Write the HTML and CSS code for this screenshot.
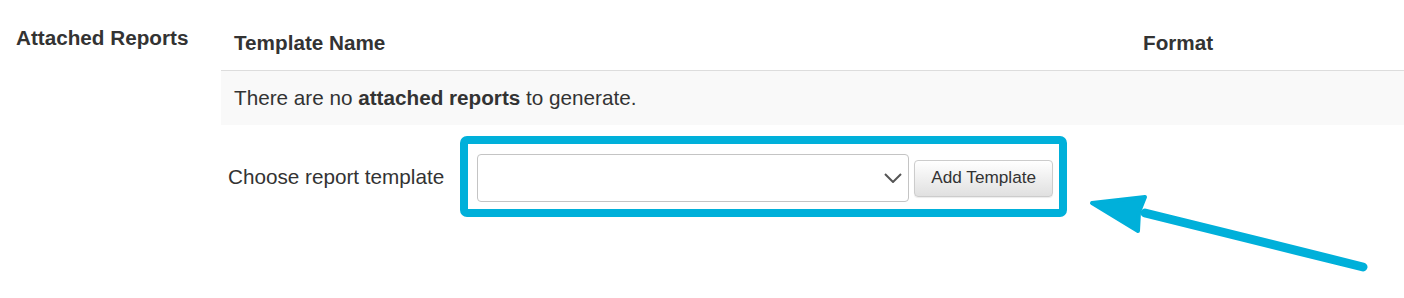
FILE: index.html
```html
<!DOCTYPE html>
<html>
<head>
<meta charset="utf-8">
<link rel="stylesheet" href="styles.css">
</head>
<body>
<div class="section">
  <div class="section-label">Attached Reports</div>
  <div class="section-body">
    <table class="reports">
      <colgroup><col class="col-name"><col class="col-format"></colgroup>
      <thead>
        <tr><th>Template Name</th><th>Format</th></tr>
      </thead>
      <tbody>
        <tr><td colspan="2">There are no <b>attached reports</b> to generate.</td></tr>
      </tbody>
    </table>
    <div class="choose-row">
      <label class="choose-label">Choose report template</label>
      <div class="highlight">
        <div class="select-box">
          <svg class="chevron" width="18" height="10" viewBox="0 0 18 10"><path d="M1 1 L9 9 L17 1" fill="none" stroke="#555" stroke-width="2"/></svg>
        </div>
        <button class="btn">Add Template</button>
      </div>
    </div>
  </div>
</div>
<svg class="arrow" width="1404" height="298" viewBox="0 0 1404 298">
  <line x1="1363" y1="267" x2="1145" y2="213" stroke="#00b0da" stroke-width="9" stroke-linecap="round"/>
  <polygon points="1092,203 1145,197 1139,212 1138,231" fill="#00b0da" stroke="#00b0da" stroke-width="4" stroke-linejoin="round"/>
</svg>
</body>
</html>
```
FILE: styles.css
```css
html, body {
  margin: 0;
  padding: 0;
  background: #fff;
}
body {
  font-family: "Liberation Sans", Arial, sans-serif;
  font-size: 20.7px;
  line-height: 29.4px;
  color: #333;
  position: relative;
  width: 1404px;
  height: 298px;
  overflow: hidden;
}
.section {
  display: flex;
  padding-top: 16px;
}
.section-label {
  width: 205px;
  padding-left: 16px;
  padding-top: 7px;
  font-weight: bold;
}
.section-body {
  flex: 1;
}
.reports {
  width: 100%;
  border-collapse: collapse;
  table-layout: fixed;
}
.col-name { width: 909px; }
.reports th {
  text-align: left;
  font-weight: bold;
  padding: 12.3px 13px;
  border-bottom: 1px solid #ddd;
}
.reports td {
  background: #f9f9f9;
  padding: 12.3px 13px;
}
.choose-row {
  display: flex;
  align-items: center;
  margin-top: 11px;
}
.choose-label {
  padding-left: 7px;
  margin-right: 16px;
}
.highlight {
  display: flex;
  align-items: center;
  border: 8px solid #00b0da;
  border-radius: 7px;
  padding: 10px 6px 7px 9px;
}
.select-box {
  box-sizing: border-box;
  width: 432px;
  height: 48px;
  border: 1px solid #c4c4c4;
  border-radius: 4px;
  background: #fff;
  display: flex;
  align-items: center;
  justify-content: flex-end;
  padding-right: 6px;
  margin-right: 5px;
}
.chevron {
  display: block;
}
.btn {
  box-sizing: border-box;
  width: 139px;
  height: 37px;
  font-family: "Liberation Sans", Arial, sans-serif;
  font-size: 17.2px;
  color: #333;
  border: 1px solid #ccc;
  border-radius: 4px;
  background: linear-gradient(#fff, #e0e0e0);
  box-shadow: 0 1px 1px rgba(0,0,0,0.08);
  padding: 0 0 2px 0;
  margin-top: 1px;
}
.arrow {
  position: absolute;
  top: 0;
  left: 0;
  pointer-events: none;
}
```
